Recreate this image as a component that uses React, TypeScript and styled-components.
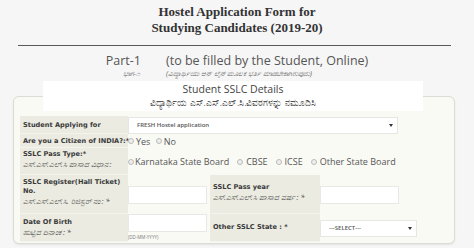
import React from "react";
import styled, { createGlobalStyle } from "styled-components";

const GlobalStyle = createGlobalStyle`
  html, body {
    margin: 0;
    padding: 0;
    background: #f6f6f6;
  }
  * {
    box-sizing: border-box;
  }
`;

const Page = styled.div`
  width: 474px;
  height: 248px;
  overflow: hidden;
  font-family: "Open Sans", "Noto Sans", sans-serif;
  color: #444;
`;

const Title = styled.h1`
  margin: 0;
  padding-top: 4px;
  font-family: "Liberation Serif", serif;
  font-weight: bold;
  font-size: 13px;
  line-height: 16px;
  color: #333;
  text-align: center;
`;

const Rule = styled.hr`
  margin: 9px 23px 0 18px;
  border: 0;
  border-top: 1px solid #5a5a5a;
`;

const PartRow = styled.div`
  display: grid;
  grid-template-columns: 141px auto;
  column-gap: 25px;
  margin-top: 7px;
`;

const PartMain = styled.div<{ $right?: boolean }>`
  font-size: 12.5px;
  line-height: 16px;
  color: #555;
  text-align: ${(p) => (p.$right ? "right" : "left")};
  white-space: nowrap;
`;

const PartSub = styled.div<{ $right?: boolean }>`
  font-size: 7px;
  line-height: 9px;
  font-style: italic;
  color: #666;
  text-align: ${(p) => (p.$right ? "right" : "left")};
  padding-right: ${(p) => (p.$right ? "1px" : "0")};
  white-space: nowrap;
`;

const SectionHead = styled.div`
  position: relative;
  z-index: 1;
  margin: 3px 0 -15px 43px;
  width: 380px;
  height: 30px;
  background: #fff;
  text-align: center;
  padding-top: 1px;
`;

const HeadTitle = styled.div`
  font-size: 10.5px;
  line-height: 14px;
  color: #444;
`;

const HeadSub = styled.div`
  font-size: 8.5px;
  line-height: 13px;
  color: #555;
`;

const Panel = styled.div`
  margin-left: 13px;
  width: 442px;
  height: 148px;
  background: #fafaf5;
  border: 1px solid #dcdcd6;
  border-radius: 6px;
  box-shadow: 0 1px 2px rgba(0, 0, 0, 0.08);
  padding: 19px 0 0 6px;
`;

const FormGrid = styled.div`
  display: grid;
  grid-template-columns: 108px 82px 110px 110px;
  grid-template-rows: 18px 14px 27px 39px 28px;
`;

const LabelCell = styled.div<{ $pad?: number }>`
  background: #ebebe1;
  border-bottom: 1px solid #f4f4ee;
  padding: ${(p) => p.$pad ?? 3}px 0 0 3px;
  font-family: "DejaVu Sans", Verdana, sans-serif;
  font-weight: bold;
  font-size: 6.6px;
  line-height: 9px;
  color: #3a3a3a;
  white-space: nowrap;
`;

const LabelSub = styled.div`
  font-family: "Noto Sans", "DejaVu Sans", sans-serif;
  font-weight: normal;
  font-style: italic;
  font-size: 7.5px;
  line-height: 11px;
  color: #555;
`;

const ValueCell = styled.div<{ $span?: number }>`
  grid-column: span ${(p) => p.$span ?? 1};
  display: flex;
  align-items: center;
  gap: 5px;
  font-size: 9px;
  color: #555;
  white-space: nowrap;
`;

const StackCell = styled.div`
  display: flex;
  flex-direction: column;
`;

const SelectBox = styled.div<{ $w: number }>`
  width: ${(p) => p.$w}px;
  height: 17px;
  background: #fff;
  border: 1px solid #e6e6e2;
  display: flex;
  align-items: center;
  justify-content: space-between;
  padding: 0 4px 0 8px;
  font-size: 6px;
  font-weight: 600;
  color: #555;
`;

const Arrow = styled.span`
  width: 0;
  height: 0;
  border-left: 2px solid transparent;
  border-right: 2px solid transparent;
  border-top: 3px solid #333;
`;

const TextInput = styled.div<{ $w: number }>`
  width: ${(p) => p.$w}px;
  height: 18px;
  background: #fff;
  border: 1px solid #e8e8e4;
`;

const Hint = styled.div`
  font-size: 4.5px;
  line-height: 10px;
  color: #777;
`;

const RadioItem = styled.label<{ $gap?: number }>`
  display: inline-flex;
  align-items: center;
  gap: ${(p) => p.$gap ?? 2}px;
  margin-right: 3px;
`;

const RadioDot = styled.span`
  width: 6px;
  height: 6px;
  border-radius: 50%;
  border: 1px solid #bbb;
  background: #eee;
`;

const Radio = ({ label, gap }: { label: string; gap?: number }) => (
  <RadioItem $gap={gap}>
    <RadioDot />
    {label}
  </RadioItem>
);

export default function App() {
  return (
    <>
      <GlobalStyle />
      <Page>
        <Title>
          Hostel Application Form for
          <br />
          Studying Candidates (2019-20)
        </Title>
        <Rule />
        <PartRow>
          <div>
            <PartMain $right>Part-1</PartMain>
            <PartSub $right>ಭಾಗ-೧</PartSub>
          </div>
          <div>
            <PartMain>(to be filled by the Student, Online)</PartMain>
            <PartSub>(ವಿದ್ಯಾರ್ಥಿಯು ಆನ್ ಲೈನ್ ಮೂಲಕ ಭರ್ತಿ ಮಾಡಬೇಕಾಗಿರುವುದು)</PartSub>
          </div>
        </PartRow>
        <SectionHead>
          <HeadTitle>Student SSLC Details</HeadTitle>
          <HeadSub>ವಿದ್ಯಾರ್ಥಿಯ ಎಸ್.ಎಸ್.ಎಲ್.ಸಿ.ವಿವರಗಳನ್ನು ನಮೂದಿಸಿ</HeadSub>
        </SectionHead>
        <Panel>
          <FormGrid>
            <LabelCell $pad={5}>Student Applying for</LabelCell>
            <ValueCell $span={3}>
              <SelectBox $w={270}>
                FRESH Hostel application
                <Arrow />
              </SelectBox>
            </ValueCell>

            <LabelCell $pad={3}>Are you a Citizen of INDIA?:*</LabelCell>
            <ValueCell $span={3}>
              <span>
                <Radio label="Yes" /> <Radio label="No" />
              </span>
            </ValueCell>

            <LabelCell $pad={2}>
              SSLC Pass Type:*
              <LabelSub>ಎಸ್.ಎಸ್.ಎಲ್.ಸಿ ಪಾಸಾದ ವಿಧಾನ :</LabelSub>
            </LabelCell>
            <ValueCell $span={3}>
              <Radio label="Karnataka State Board" gap={1} />
              <Radio label="CBSE" gap={3} />
              <Radio label="ICSE" gap={3} />
              <Radio label="Other State Board" gap={3} />
            </ValueCell>

            <LabelCell $pad={3}>
              SSLC Register(Hall Ticket)
              <br />
              No.
              <LabelSub>ಎಸ್.ಎಸ್.ಎಲ್.ಸಿ. ರಿಜಿಸ್ಟರ್ ನಂ : *</LabelSub>
            </LabelCell>
            <ValueCell>
              <TextInput $w={79} />
            </ValueCell>
            <LabelCell $pad={8}>
              SSLC Pass year
              <LabelSub>ಎಸ್.ಎಸ್.ಎಲ್.ಸಿ ಪಾಸಾದ ವರ್ಷ : *</LabelSub>
            </LabelCell>
            <ValueCell>
              <TextInput $w={79} />
            </ValueCell>

            <LabelCell $pad={4}>
              Date Of Birth
              <LabelSub>ಹುಟ್ಟಿದ ದಿನಾಂಕ : *</LabelSub>
            </LabelCell>
            <StackCell>
              <TextInput $w={79} />
              <Hint>(DD-MM-YYYY)</Hint>
            </StackCell>
            <LabelCell $pad={9}>Other SSLC State : *</LabelCell>
            <ValueCell>
              <SelectBox $w={97}>
                ---SELECT---
                <Arrow />
              </SelectBox>
            </ValueCell>
          </FormGrid>
        </Panel>
      </Page>
    </>
  );
}
